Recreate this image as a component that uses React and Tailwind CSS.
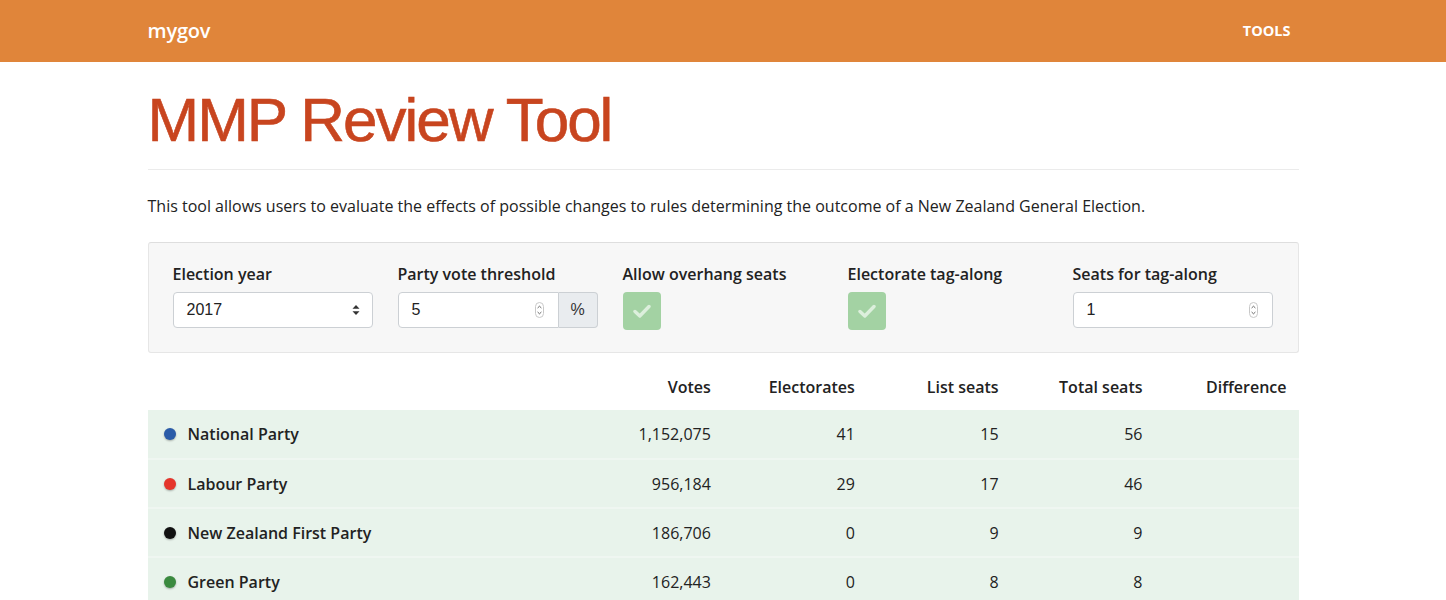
import React from 'react';

const parties = [
  { name: 'National Party', color: '#2a5ba8', votes: '1,152,075', electorates: 41, list: 15, total: 56 },
  { name: 'Labour Party', color: '#e5352b', votes: '956,184', electorates: 29, list: 17, total: 46 },
  { name: 'New Zealand First Party', color: '#111111', votes: '186,706', electorates: 0, list: 9, total: 9 },
  { name: 'Green Party', color: '#3a8a3f', votes: '162,443', electorates: 0, list: 8, total: 8 },
];

function Spinner() {
  return (
    <svg width="9" height="16" viewBox="0 0 9 16" className="shrink-0">
      <rect x="0.5" y="0.5" width="8" height="15" rx="4" fill="none" stroke="#c8c8c8" />
      <path d="M2.6 6 L4.5 4.2 L6.4 6" fill="none" stroke="#555" strokeWidth="0.9" />
      <path d="M2.6 10 L4.5 11.8 L6.4 10" fill="none" stroke="#555" strokeWidth="0.9" />
    </svg>
  );
}

function CheckBox() {
  return (
    <div className="w-[38px] h-[38px] rounded-[4px] bg-[#a3d2a3] flex items-center justify-center">
      <svg width="18" height="14" viewBox="0 0 18 14">
        <path d="M2 7.5 L6.8 12 L16 2.5" fill="none" stroke="#dcefdc" strokeWidth="3.4" strokeLinecap="round" strokeLinejoin="round" />
      </svg>
    </div>
  );
}

function Field({ label, children }) {
  return (
    <div className="w-[200px] flex flex-col">
      <label className="text-[16px] font-semibold text-[#222] leading-[20px] mb-[8px]">{label}</label>
      {children}
    </div>
  );
}

export default function App() {
  return (
    <div className="min-h-screen bg-white font-['Open_Sans',sans-serif] text-[#222]">
      {/* Navbar */}
      <div className="h-[62px] bg-[#e0853a]">
        <div className="w-[1151px] mx-auto h-full flex items-center justify-between">
          <span className="text-white text-[20px] font-semibold tracking-[-0.2px]">mygov</span>
          <span className="text-white text-[14.5px] font-bold mr-[8px]">TOOLS</span>
        </div>
      </div>

      <div className="w-[1151px] mx-auto">
        {/* Title */}
        <div className="pt-[27px] pb-[18px] border-b border-[#ebebeb]">
          <h1 className="font-['Liberation_Sans',Arial,sans-serif] text-[62px] leading-[62px] tracking-[-2px] text-[#c8451f] [-webkit-text-stroke:0.6px_#c8451f]">
            MMP Review Tool
          </h1>
        </div>

        <p className="mt-[24px] text-[16px] leading-[24px] text-[#222]">
          This tool allows users to evaluate the effects of possible changes to rules determining the outcome of a New Zealand General Election.
        </p>

        {/* Controls panel */}
        <div className="mt-[24px] bg-[#f7f7f7] border border-[#e6e6e6] border-t-[#dedede] rounded-[3px] px-[24px] pt-[21px] pb-[22px] flex gap-[25px]">
          <Field label="Election year">
            <div className="h-[36px] bg-white border border-[#ccd0d4] rounded-[4px] flex items-center justify-between pl-[13px] pr-[12px] text-[16px] font-['Liberation_Sans',Arial,sans-serif] text-[#222]">
              <span>2017</span>
              <svg width="8" height="12" viewBox="0 0 8 12">
                <path d="M0.5 4.8 L4 1 L7.5 4.8 Z" fill="#333" />
                <path d="M0.5 7.2 L4 11 L7.5 7.2 Z" fill="#333" />
              </svg>
            </div>
          </Field>
          <Field label="Party vote threshold">
            <div className="h-[36px] flex">
              <div className="flex-1 bg-white border border-[#ccd0d4] rounded-l-[4px] flex items-center justify-between pl-[13px] pr-[14px] text-[16px] font-['Liberation_Sans',Arial,sans-serif]">
                <span>5</span>
                <Spinner />
              </div>
              <div className="w-[39px] bg-[#e9ecef] border border-l-0 border-[#ccd0d4] rounded-r-[4px] flex items-center justify-center text-[16px] font-['Liberation_Sans',Arial,sans-serif] text-[#333]">
                %
              </div>
            </div>
          </Field>
          <Field label="Allow overhang seats">
            <CheckBox />
          </Field>
          <Field label="Electorate tag-along">
            <CheckBox />
          </Field>
          <Field label="Seats for tag-along">
            <div className="h-[36px] bg-white border border-[#ccd0d4] rounded-[4px] flex items-center justify-between pl-[13px] pr-[14px] text-[16px] font-['Liberation_Sans',Arial,sans-serif]">
              <span>1</span>
              <Spinner />
            </div>
          </Field>
        </div>

        {/* Results table */}
        <table className="w-full mt-[10px] border-collapse text-[16px]">
          <thead>
            <tr className="h-[47px]">
              <th className="w-[432px]"></th>
              <th className="text-right font-semibold px-[12px]">Votes</th>
              <th className="text-right font-semibold px-[12px]">Electorates</th>
              <th className="text-right font-semibold px-[12px]">List seats</th>
              <th className="text-right font-semibold px-[12px]">Total seats</th>
              <th className="text-right font-semibold px-[12px]">Difference</th>
            </tr>
          </thead>
          <tbody>
            {parties.map((p) => (
              <tr key={p.name} className="h-[49px] bg-[#e8f3eb] border-b-2 border-[#eff6f1]">
                <td className="pl-[16px]">
                  <div className="flex items-center gap-[12px]">
                    <span
                      className="w-[12px] h-[12px] rounded-full shadow-[0_1px_2px_rgba(0,0,0,0.3)]"
                      style={{ backgroundColor: p.color }}
                    />
                    <span className="font-semibold">{p.name}</span>
                  </div>
                </td>
                <td className="text-right px-[12px] w-[144px]">{p.votes}</td>
                <td className="text-right px-[12px] w-[144px]">{p.electorates}</td>
                <td className="text-right px-[12px] w-[144px]">{p.list}</td>
                <td className="text-right px-[12px] w-[144px]">{p.total}</td>
                <td className="text-right px-[12px] w-[144px]"></td>
              </tr>
            ))}
          </tbody>
        </table>
      </div>
    </div>
  );
}
